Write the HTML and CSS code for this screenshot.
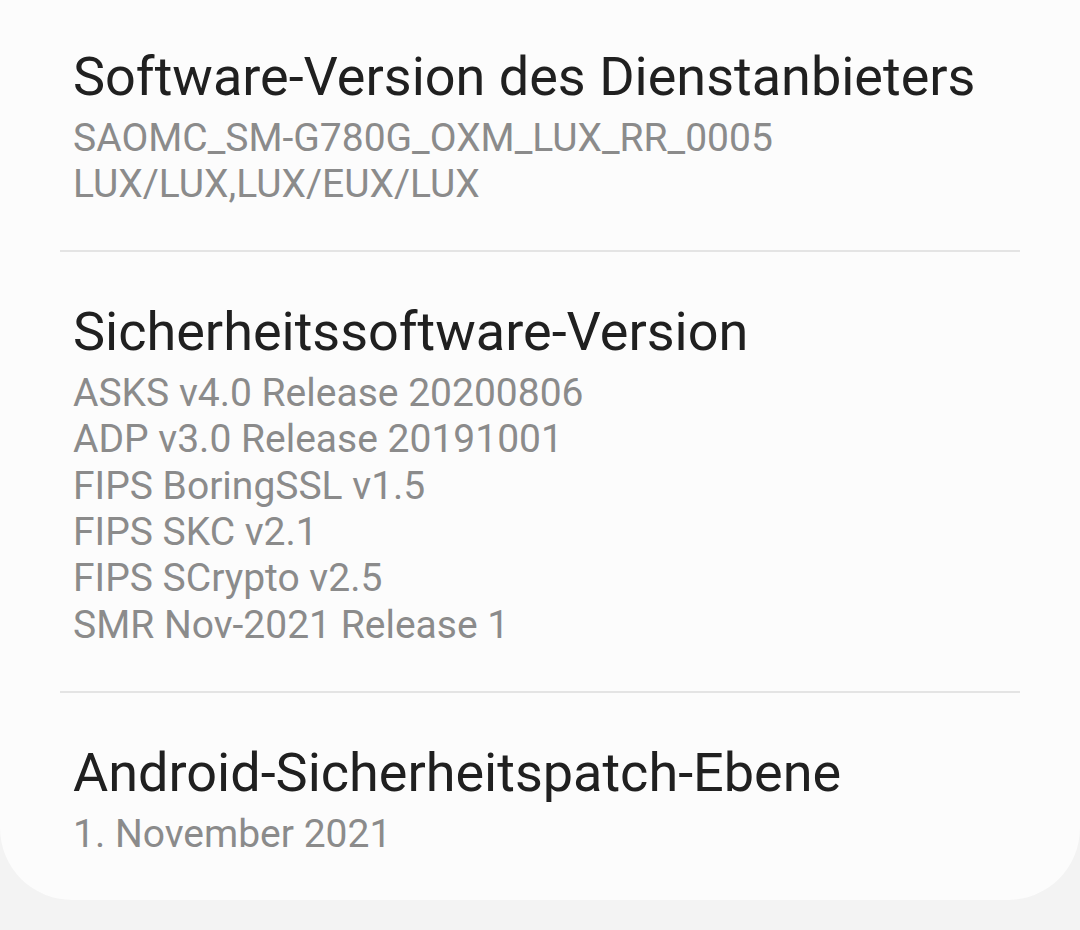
FILE: index.html
```html
<!DOCTYPE html>
<html lang="de">
<head>
  <meta charset="UTF-8">
  <title>Softwareinformationen</title>
  <link rel="stylesheet" href="styles.css">
</head>
<body>

<div class="info-card">
  <div class="info-item">
    <div class="info-title">Software-Version des Dienstanbieters</div>
    <div class="info-value">SAOMC_SM-G780G_OXM_LUX_RR_0005</div>
    <div class="info-value">LUX/LUX,LUX/EUX/LUX</div>
  </div>
  <div class="divider"></div>
  <div class="info-item">
    <div class="info-title">Sicherheitssoftware-Version</div>
    <div class="info-value">ASKS v4.0 Release 20200806</div>
    <div class="info-value">ADP v3.0 Release 20191001</div>
    <div class="info-value">FIPS BoringSSL v1.5</div>
    <div class="info-value">FIPS SKC v2.1</div>
    <div class="info-value">FIPS SCrypto v2.5</div>
    <div class="info-value">SMR Nov-2021 Release 1</div>
  </div>
  <div class="divider"></div>
  <div class="info-item">
    <div class="info-title">Android-Sicherheitspatch-Ebene</div>
    <div class="info-value">1. November 2021</div>
  </div>
</div>

</body>
</html>
```

FILE: styles.css
```css
body {
  margin: 0;
  font-family: Roboto, 'Noto Sans', sans-serif;
  background: #f3f3f3;
  height: 930px;
  overflow: hidden;
}

.info-card {
  box-sizing: border-box;
  background: #fcfcfc;
  border-radius: 0 0 72px 72px;
  padding-top: 47px;
  height: 900px;
}

.info-item {
  padding: 0 73px;
}

.info-title {
  font-size: 54px;
  line-height: 60px;
  color: #202020;
  margin-bottom: 7.5px;
}

.info-value {
  font-size: 39px;
  line-height: 46.4px;
  color: #8b8b8b;
}

.divider {
  height: 2px;
  background: #e4e4e4;
  margin: 43px 60px 50px;
}
```
